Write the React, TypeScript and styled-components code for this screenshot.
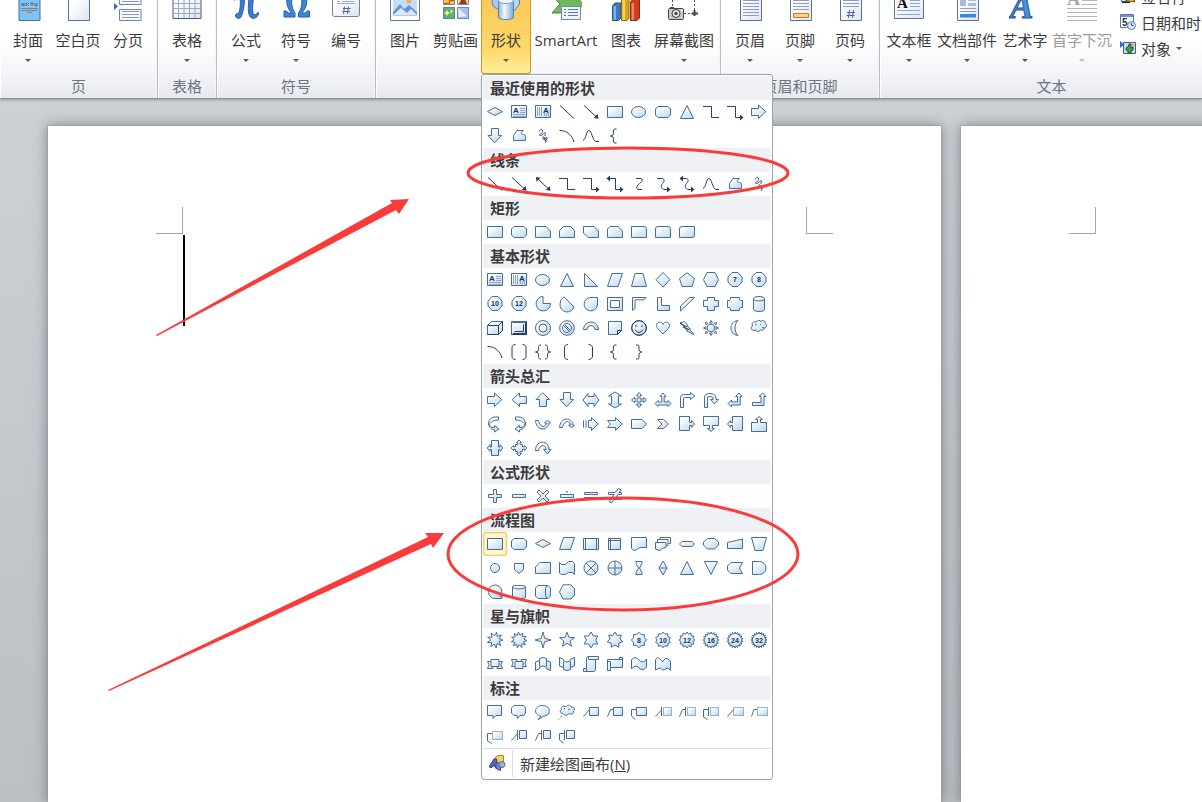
import React from 'react';
import styled, { createGlobalStyle, css } from 'styled-components';

const GlobalStyle = createGlobalStyle`
  *, *::before, *::after { box-sizing: border-box; }
  body {
    margin: 0;
    font-family: "Open Sans", "Noto Sans CJK SC", sans-serif;
    font-size: 15px;
    color: #3b3b3b;
    background: #bcbfc4;
  }
  button { font: inherit; color: inherit; }
`;

const Shell = styled.div`
  position: relative;
  display: flex;
  flex-direction: column;
  min-height: 100vh;
  overflow: hidden;
`;

/* ---------- ribbon ---------- */

const Ribbon = styled.header`
  position: relative;
  z-index: 2;
  display: flex;
  height: 99px;
  background: linear-gradient(#ffffff 0, #ffffff 40px, #f4f5f8 72px, #e6e9ee 98px);
  border-bottom: 1px solid #8b9097;
  box-shadow: 0 1px 3px rgba(80, 86, 94, 0.45);
`;

const Group = styled.section<{ $width: number; $grow?: boolean }>`
  flex: ${(p) => (p.$grow ? 1 : 0)} 0 ${(p) => p.$width}px;
  display: flex;
  flex-direction: column;
  justify-content: space-between;
  border-right: 1px solid #b9bcc2;
  box-shadow: inset -1px 0 #f4f5f8, inset 1px 0 #ffffff;
`;

const Tools = styled.div<{ $pad: number }>`
  display: flex;
  height: 74px;
  padding-left: ${(p) => p.$pad}px;
`;

const GroupTitle = styled.h2`
  margin: 0;
  height: 24px;
  line-height: 24px;
  font-size: 15px;
  font-weight: 400;
  text-align: center;
  color: #6b7480;
`;

const Slot = styled.div`
  position: relative;
  display: flex;
`;

const ToolButton = styled.button<{ $width: number; $active?: boolean }>`
  flex: none;
  width: ${(p) => p.$width}px;
  height: 74px;
  padding: 0;
  display: flex;
  flex-direction: column;
  align-items: center;
  border: 0;
  background: none;
  white-space: nowrap;
  &:disabled { color: #9b9b9b; }
  svg { display: block; flex: none; }
  ${(p) =>
    p.$active &&
    css`
      border: 1px solid #c29b29;
      border-top: 0;
      border-radius: 0 0 3px 3px;
      background: linear-gradient(#f9c95a 0, #ffd86b 50px, #fff09a 74px);
    `}
`;

const ToolLabel = styled.span`
  height: 20px;
  margin: 6px 0 9px;
  line-height: 20px;
`;

const Caret = styled.i<{ $faint?: boolean }>`
  width: 0;
  height: 0;
  border: 3px solid transparent;
  border-top-color: ${(p) => (p.$faint ? '#bdbdbd' : '#5c5c5c')};
  border-bottom: 0;
`;

const SmallTools = styled.div`
  display: flex;
  flex-direction: column;
  margin: -17px 0 0 6px;
`;

const SmallButton = styled.button`
  display: flex;
  align-items: center;
  gap: 5px;
  height: 26px;
  padding: 0;
  border: 0;
  background: none;
  white-space: nowrap;
  svg { flex: none; }
`;

/* ---------- shapes menu ---------- */

const Menu = styled.div`
  position: absolute;
  left: 0;
  top: 100%;
  z-index: 3;
  width: 292px;
  padding: 1px;
  border: 1px solid #9da1a8;
  border-radius: 3px;
  background: #fff;
`;

const MenuHeading = styled.h3`
  margin: 0;
  height: 24px;
  padding-left: 7px;
  line-height: 24px;
  font-size: 15px;
  font-weight: 700;
  background: #f0f1f5;
`;

const ShapeGrid = styled.div`
  display: grid;
  grid-template-columns: repeat(12, 24px);
  grid-auto-rows: 24px;
`;

const ShapeButton = styled.button<{ $selected?: boolean }>`
  display: grid;
  place-items: center;
  padding: 0;
  border: 0;
  border-radius: 3px;
  background: none;
  svg { display: block; }
  ${(p) =>
    p.$selected &&
    css`
      background: #fff5cf;
      box-shadow: inset 0 0 0 1px #f3d061, inset 0 0 0 2px #fbe9a6;
    `}
`;

const CanvasItem = styled.button`
  display: flex;
  width: 100%;
  height: 30px;
  padding: 0;
  border: 0;
  border-top: 1px solid #dcdee3;
  background: none;
  text-align: left;
`;

const ItemIcon = styled.span`
  width: 30px;
  margin: 1px 0;
  border-right: 1px solid #dcdee3;
  display: flex;
  align-items: center;
  padding-left: 6px;
`;

const ItemText = styled.span`
  padding-left: 7px;
  line-height: 30px;
`;

/* ---------- document ---------- */

const Workspace = styled.main`
  flex: 1;
  display: flex;
  gap: 20px;
  min-height: 703px;
  padding: 27px 0 0 48px;
  background: linear-gradient(#cdd1d6, #bcbfc4);
`;

const Page = styled.article`
  flex: 0 0 893px;
  padding-top: 81px;
  background: #fff;
  box-shadow: 0 0 0 1px rgba(150, 154, 160, 0.5), 0 0 12px 1px rgba(72, 78, 86, 0.55);
`;

const Marks = styled.div`
  display: flex;
  justify-content: space-between;
  padding: 0 108px;
`;

const Mark = styled.span<{ $side: 'left' | 'right' }>`
  width: 27px;
  height: 27px;
  border-bottom: 1px solid #a6a6a6;
  border-${(p) => (p.$side === 'left' ? 'right' : 'left')}: 1px solid #a6a6a6;
`;

const TextCursor = styled.div`
  width: 2px;
  height: 91px;
  margin: 1px 0 0 135px;
  background: #000;
`;

const Annotations = styled.svg`
  position: absolute;
  left: 0;
  top: 0;
  z-index: 4;
  pointer-events: none;
`;

/* ---------- shape glyphs, drawn on a 24 x 24 grid ---------- */

type Glyph = {
  f?: string; // outlined and filled
  h?: string; // thin blue outline over the fill
  l?: string; // dark line
  s?: string; // dark solid
  d?: string; // dotted box
  t?: string; // number or letter inside
  tx?: number;
};

const RECT = 'M4.5 6.5H19.5V17.5H4.5Z';
const OCTAGON = 'M9 4.5H15L19 9V14L15 18.5H9L5 14V9Z';
const circ = (x: number, y: number, r: number, ry = r) =>
  `M${x - r} ${y}A${r} ${ry} 0 1 1 ${x + r} ${y}A${r} ${ry} 0 1 1 ${x - r} ${y}Z`;

const star = (n: number, r1: number, r2: number, turn = 0) => {
  let d = '';
  for (let i = 0; i < n * 2; i++) {
    const r = i % 2 ? r2 : r1;
    const a = (Math.PI * i) / n - Math.PI / 2 + turn;
    d += `${i ? 'L' : 'M'}${(12 + r * Math.cos(a)).toFixed(1)} ${(12 + r * Math.sin(a)).toFixed(1)}`;
  }
  return d + 'Z';
};

const G: Record<string, Glyph> = {
  decision: { f: 'M4.5 11.5L12 7.5 19.5 11.5 12 15.5Z' },
  textBox: { f: 'M4.5 5.5H19.5V17.5H4.5Z', h: 'M13 8.5H18M13 10.5H18M13 12.5H18M6 14.5H18M6 16.5H18', t: 'A', tx: 9 },
  vTextBox: { f: 'M4.5 5.5H19.5V17.5H4.5Z', h: 'M6.5 7V16M8.5 7V16M10.5 7V16M13.5 13V16M15.5 13V16M17.5 13V16', t: 'A', tx: 15 },
  line: { l: 'M5 5.5L19 18.5' },
  lineArrow: { l: 'M5 5.5L17 16.5', s: 'M19.5 18.8L18.6 14 14.8 18Z' },
  lineDouble: { l: 'M7 7L17 16.5', s: 'M19.5 18.8L18.6 14 14.8 18ZM4.8 5L5.6 9.8 9.4 5.8Z' },
  elbow: { l: 'M4 6.5H12.5V17.5H20' },
  elbowArrow: { l: 'M4 6.5H12.5V17.5H18', s: 'M17 14.5L20.5 17.5 17 20.5Z' },
  elbowDouble: { l: 'M6 6.5H12.5V17.5H18', s: 'M17 14.5L20.5 17.5 17 20.5ZM7 3.5L3.5 6.5 7 9.5Z' },
  curveConn: { l: 'M9 6.5H13C17 6.5 15.5 9.5 12.5 11.5S8.5 17.5 12 17.5H15' },
  curveArrow: { l: 'M6 6.5H10C14.5 6.5 13.5 9.5 11.5 11.5S10 17.5 14 17.5H17', s: 'M16 14.5L19.5 17.5 16 20.5Z' },
  curveDouble: { l: 'M7 6.5H10C14.5 6.5 13.5 9.5 11.5 11.5S10 17.5 14 17.5H17', s: 'M16 14.5L19.5 17.5 16 20.5ZM8 3.5L4.5 6.5 8 9.5Z' },
  curve: { l: 'M4 16.5C7.5 15 7 6.5 10 6.5S13 16.5 17 17.5H20' },
  freeform: { f: 'M10 6.5H16.5C13.5 8 14 10.5 16.5 10.5 19 11 18.5 13.5 18.5 16.5H6.5V11.5Z' },
  scribble: { l: 'M8 7.5C9 7 10.5 3.5 11.5 6.5S7 10.5 9 11.5 14.5 6.5 14.5 9.5 10 13.5 12 14.5 17 11.5 16 14.5 13 17 13 14.5 17 17 14 19' },
  arrowRight: { f: 'M4.5 8.5H11.5V5L18.8 11.7 11.5 18.5V15.5H4.5Z' },
  arrowLeft: { f: 'M19.5 8.5H12.5V5L5.2 11.7 12.5 18.5V15.5H19.5Z' },
  arrowUp: { f: 'M8.5 18.5V11.5H5L11.7 4.8 18.5 11.5H15.5V18.5Z' },
  arrowDown: { f: 'M8.5 4.5V11.5H5L11.7 18.8 18.5 11.5H15.5V4.5Z' },
  arc: { l: 'M4.5 6.5C12 6.5 17 11 19 18' },
  lBrace: { l: 'M13.500 5H12C10.500 5 10.500 6 10.500 8.500S10 11.500 7.500 12C10 12.500 10.500 13 10.500 15.500S10.500 19 12 19H13.500' },
  rBrace: { l: 'M9 5H10.5C12 5 12 6 12 8.5S12.5 11.5 15 12C12.5 12.5 12 13 12 15.5S12 19 10.5 19H9' },
  lBracket: { l: 'M13 4.5C10.5 4.5 9.5 6 9.5 8V16C9.5 18 10.5 19.5 13 19.5' },
  rBracket: { l: 'M9.5 4.5C12 4.5 13.5 6 13.5 8V16C13.5 18 12 19.5 9.5 19.5' },
  brackets: { l: 'M8.5 4.5C6 4.5 5 6 5 8V16C5 18 6 19.5 8.5 19.5M15.5 4.5C18 4.5 19 6 19 8V16C19 18 18 19.5 15.5 19.5' },
  braces: { l: 'M10 5C7 5 7.5 7 7.5 9S7 11.5 4.5 12C7 12.5 7.5 13 7.5 15S7 19 10 19M14 5C17 5 16.5 7 16.5 9S17 11.5 19.5 12C17 12.5 16.5 13 16.5 15S17 19 14 19' },
  rect: { f: RECT },
  ellipse: { f: circ(11.5, 12, 7, 5.5) },
  round: { f: 'M7 6.5H17L19.5 9V15L17 17.5H7L4.5 15V9Z' },
  triangle: { f: 'M12 5.5L18.5 18.5H5.5Z' },
  snip1: { f: 'M4.5 6.5H15L19.5 11V17.5H4.5Z' },
  snip2: { f: 'M8.5 6.5H15.5L19.5 10.5V17.5H4.5V10.5Z' },
  snipDiag: { f: 'M4.5 6.5H15L19.5 11V17.5H9L4.5 13Z' },
  snipRound: { f: 'M7 6.5H15L19.5 11V17.5H4.5V9Z' },
  round1: { f: 'M4.5 6.5H17Q19.5 6.5 19.5 9V17.5H4.5Z' },
  round2: { f: 'M7 6.5H17Q19.5 6.5 19.5 9V17.5H4.5V9Q4.5 6.5 7 6.5Z' },
  roundDiag: { f: 'M7 6.5H19.5V15Q19.5 17.5 17 17.5H4.5V9Q4.5 6.5 7 6.5Z' },
  rTriangle: { f: 'M5.5 5.5V18.5H18.5Z' },
  parallelogram: { f: 'M9 5.5H19.5L15 18.5H4.5Z' },
  trapezoid: { f: 'M8 5.5H16L19.5 18.5H4.5Z' },
  diamond: { f: 'M12 4.5L19 11.7 12 19 5 11.7Z' },
  pentagon: { f: 'M12 4.8L19.5 10.5 17 18.5H7L4.5 10.5Z' },
  hexagon: { f: 'M8 4.5H16L19.5 11.7 16 18.5H8L4.5 11.7Z' },
  hept: { f: OCTAGON, t: '7' },
  oct: { f: OCTAGON, t: '8' },
  dec: { f: OCTAGON, t: '10' },
  dodec: { f: OCTAGON, t: '12' },
  pie: { f: 'M12 4.5V11.5H19.5A7.2 7.2 0 1 1 12 4.5Z' },
  chord: { f: 'M9 4.8L19 15A7.2 7.2 0 0 1 5 12Q5 7 9 4.8Z' },
  teardrop: { f: 'M18.5 5.5V12A6.7 6.7 0 1 1 12 5.5Z' },
  frame: { f: 'M4.5 5.5H19.5V18.5H4.5ZM7.5 8.5V15.5H16.5V8.5Z' },
  halfFrame: { f: 'M5.5 5.5H19L17 7.8H8V16.5L5.5 18.5Z' },
  lShape: { f: 'M6.5 5.5H10.5V13.5H18.5V18.5H6.5Z' },
  stripe: { f: 'M14.5 5.5H19.5L5.5 19V14Z' },
  cross: { f: 'M8.5 5.5H15.5V8.5H19.5V14.5H15.5V18.5H8.5V14.5H4.5V8.5H8.5Z' },
  plaque: { f: 'M7.500 5.500H16.500V7.500L17.500 8.500H19.500V15.500H17.500L16.500 16.500V18.500H7.500V16.500L6.500 15.500H4.500V8.500H6.500L7.500 7.500Z' },
  can: { f: 'M6.5 6.5Q6.5 4.5 12 4.5T17.5 6.5V17.5Q17.5 19.5 12 19.5T6.5 17.5Z', h: 'M6.5 7Q7 9 12 9T17.5 7' },
  cube: { f: 'M4.5 9.5L8.5 5.5H19.5V14.5L15.5 18.5H4.5Z', l: 'M4.5 9.5H15.5V18.5M15.5 9.5L19.5 5.5V14.5L15.5 18.5H4.5' },
  bevel: { f: 'M4.5 5.5H19.5V18.5H4.5Z', h: 'M5.500 6.500H18.500', l: 'M7.5 15.5H16.5V8.5M19.5 5.5V18.5H4.5M18.5 6.5V17.5H6' },
  donut: { f: circ(12, 12, 7.5) + circ(12, 12, 4) },
  noSymbol: { f: circ(12, 12, 7.3), h: circ(12, 12, 4.500) + 'M8.500 9.500L14.500 15.500M9.500 8.500L15.500 14.500' },
  blockArc: { f: 'M4.5 13.5A7.5 7.5 0 0 1 19.5 13.5H16A4 4 0 0 0 8 13.5Z' },
  folded: { f: 'M5.5 5.5H18.5V14.5L14.5 18.5H5.5Z', l: 'M14.5 18.5V14.5H18.5Z' },
  smiley: { f: circ(12, 12, 7.3), l: circ(12, 12, 7.3) + 'M9 9V11M15 9V11M8 13.5Q9.5 16.5 12 16.5T16 13.5' },
  heart: { f: 'M12 8.5C13 5 18.5 5.5 18.5 9.5 18.5 12.5 14.5 15 12 18 9.5 15 5.5 12.5 5.5 9.5 5.5 5.5 11 5 12 8.5Z' },
  bolt: { f: 'M5 7L9.5 5.5 13 9.5 12 10 15.5 13 14.5 13.5 19 18.5 11 14.5 12.5 14 8 11 9.5 10.5Z', l: 'M5 7L12 11M8.5 11L14 13.5' },
  sun: { f: circ(12, 12, 3.8), h: 'M12 4.5L13.5 7H10.5ZM12 19.5L13.5 17H10.5ZM4.5 12L7 10.5V13.5ZM19.5 12L17 10.5V13.5ZM6.5 6.5L9 7.3 7.3 9ZM17.5 6.5L15 7.3 16.7 9ZM6.5 17.5L9 16.7 7.3 15ZM17.5 17.5L15 16.7 16.7 15Z' },
  moon: { f: 'M15 4.5C10 5 8 8.5 8 12S10 19 15 19.5C11 16 11 8 15 4.5Z' },
  cloud: { f: 'M7 14.500C4 14.500 3.500 11 5.500 10 4 7 7 5 9 6.200 10.500 4 13 4 14 5.500 16 3.500 18.500 5 18 7 20.500 8 20 11.500 17.500 12 17 14.500 14.500 15 13.500 13.800 12 16.500 9 16 8.800 13.800Z', h: 'M8 9L10 8M13 8L14 9M15 11.500L17.500 12' },
  leftRight: { f: 'M4 12L9 5.5V8.5H15V5.5L20 12 15 18.5V15.5H9V18.5Z' },
  upDown: { f: 'M12 4L18.5 8H15.5V16H18.5L12 20 5.5 16H8.5V8H5.5Z' },
  quad: { f: 'M12 4.5L14.5 7.5H13V11H16.5V9.5L19.5 12 16.5 14.5V13H13V16.5H14.5L12 19.5 9.5 16.5H11V13H7.5V14.5L4.5 12 7.5 9.5V11H11V7.5H9.5Z' },
  triArrow: { f: 'M12 5L15 8.5H13.2V14H17V12.5L20 15.5 17 18.5V17H7V18.5L4 15.5 7 12.5V14H10.8V8.5H9Z' },
  bent: { f: 'M5.5 19.5V9.5Q5.5 6.5 8.5 6.5H15.5V4.5L19.8 8 15.5 11.5V9.5H9.5Q8.5 9.5 8.5 11V19.5Z' },
  uTurn: { f: 'M5.5 19.5V10Q5.5 5.5 11 5.5T17 10V11.5H19.5L15.5 16 11.5 11.5H14V10Q14 8.5 11 8.5T8.5 10V19.5Z' },
  leftUp: { f: 'M5 15.5L8.5 12V14H14.5V8.5H12.5L16 5 19 8.5H17.2V17H8.5V19Z' },
  bentUp: { f: 'M5.5 14.5H14V8.5H12L15.7 5 19 8.5H17V17.5H5.5Z' },
  curvedRight: { f: 'M15.500 5C7 4 4.500 9 6.500 13 8 15.500 9.500 15.500 11.500 15.500V13.500L16 17 11.500 20V18C8 17.500 5 14 5.500 10.500M7 11.500C9 8.500 12 8 15.500 8V5' },
  curvedLeft: { f: 'M8.500 5C17 4 19.500 9 17.500 13 16 15.500 14.500 15.500 12.500 15.500V13.500L8 17 12.500 20V18C16 17.500 19 14 18.500 10.500M17 11.500C15 8.500 12 8 8.500 8V5' },
  curvedUp: { f: 'M4.5 8.5H7.5C8 12 10 14 12.5 14.5 14.5 13.5 15.5 12.5 15.5 11H13.5L16.5 8 19.5 11H18C17.5 15 14.5 17 11.5 17 8 17 4.8 13.5 4.5 8.5Z' },
  curvedDown: { f: 'M4.5 15.5H7.5C8 12 10 10 12.5 9.5 14.5 10.5 15.5 11.5 15.5 13H13.5L16.5 16 19.5 13H18C17.5 9 14.5 7 11.5 7 8 7 4.8 10.5 4.5 15.5Z' },
  striped: { f: 'M9.5 8.5H12.5V5.5L19 12 12.5 18.5V15.5H9.5Z', h: 'M4.5 8.5V15.5M7 8.5V15.5' },
  notched: { f: 'M4.5 8.5H12.5V5.5L19 12 12.5 18.5V15.5H4.5L7.5 12Z' },
  pentArrow: { f: 'M4.5 7.5H15L19.5 12 15 16.5H4.5Z' },
  chevron: { f: 'M6.5 7.5H12.5L17.5 12 12.5 16.5H6.5L11 12Z' },
  calloutR: { f: 'M4.5 4.5H14.5V10.5H16.5V8.5L19.5 12 16.5 15.5V13.5H14.5V18.5H4.5Z' },
  calloutD: { f: 'M4.5 4.5H19.5V13.5H13.5V16.5H15.5L12 19.5 8.5 16.5H10.5V13.5H4.5Z' },
  calloutL: { f: 'M19.5 4.5H9.5V10.5H7.5V8.5L4.5 12 7.5 15.5V13.5H9.5V18.5H19.5Z' },
  calloutU: { f: 'M4.5 19.5H19.5V10.5H13.5V7.5H15.5L12 4.5 8.5 7.5H10.5V10.5H4.5Z' },
  calloutLR: { f: 'M8.5 4.5H15.5V11H17V8.5L19.8 12 17 15.5V13.5H15.5V19.5H8.5V13.5H7V15.5L4.2 12 7 8.5V11H8.5Z' },
  calloutQ: { f: 'M12 4L14.5 6.5H13.2V8.5H15.5V10.8H17.5V9.5L20 12 17.5 14.5V13.2H15.5V15.5H13.2V17.5H14.5L12 20 9.5 17.5H10.8V15.5H8.5V13.2H6.5V14.5L4 12 6.5 9.5V10.8H8.5V8.5H10.8V6.5H9.5Z' },
  circular: { f: 'M4.5 14.5C4.5 3.5 18 3.5 18 13.5H20L16.5 18 12.5 13.5H15C14.5 8 8.5 8.5 7.5 14.5Z' },
  plus: { f: 'M10.5 5.5H13.5V10.5H18.5V13.5H13.5V18.5H10.5V13.5H5.5V10.5H10.5Z' },
  minus: { f: 'M5.5 10.5H18.5V13.5H5.5Z' },
  times: { f: 'M8 6L12 10 16 6 18 8 14 12 18 16 16 18 12 14 8 18 6 16 10 12 6 8Z' },
  divide: { f: 'M5.5 10.5H18.5V13.5H5.5ZM11.5 7.5H12.5V8H11.5ZM11.5 16H12.5V17H11.5Z' },
  equal: { f: 'M5.5 8.5H18.5V10.5H5.5ZM5.5 13.5H18.5V15.5H5.5Z' },
  notEqual: { f: 'M5.5 8.5H12L15.5 4.5 18.5 6 16 8.5H18.5V10.5H15L13 13.5H18.5V15.5H11L8.5 19 6 17.5 8 15.5H5.5V13.5H9L11 10.5H5.5Z' },
  alt: { f: 'M7 6.5H17L19.5 9V15L17 17.5H7L4.5 15V9Z' },
  data: { f: 'M8.5 5.5H19.5L15.5 17.5H4.5Z' },
  predefined: { f: 'M4.5 6.5H19.5V17.5H4.5Z', h: 'M6.500 6.500V17.500M17.500 6.500V17.500' },
  internal: { f: 'M5.5 6.5H17.5V17.5H5.5Z', h: 'M7.500 6.500V17.500M5.500 8.500H17.500' },
  doc: { f: 'M4.5 5.5H19.5V15.5H14C11 15.5 10 18.5 7 18.5L4.5 16.5Z' },
  docs: { f: 'M4.5 10.5H15V15.5C11 15.5 10 18.5 8 18.5L4.5 17Z', h: 'M6.5 10V7.5H17V13.5H15.5M9 7V5.5H19.5V11.5H17.5' },
  terminator: { f: 'M7 9.5H17L19.5 12 17 14.5H7L4.5 12Z' },
  prep: { f: 'M8.500 6.500H15.500L19.500 10V13L15.500 17H8.500L4.500 13V10Z' },
  manualInput: { f: 'M4.5 10.5L19.5 7V16.5H4.5Z' },
  manualOp: { f: 'M4.5 5.5H19.5L16 18.5H8Z' },
  connector: { f: circ(12, 12, 4.5) },
  offpage: { f: 'M7.5 7.5H16.5V13.5L12 17.5 7.5 13.5Z' },
  card: { f: 'M9 6.5H19.5V17.5H4.5V11Z' },
  tape: { f: 'M4.500 6.500L6.500 8.500H10.500L13.500 5.500H17.500L19.500 7.500V18.500L17.500 16.500H13.500L10.500 18.500H6.500L4.500 17Z' },
  summing: { f: circ(12, 12, 7), h: 'M7 7L17 17M17 7L7 17' },
  or: { f: circ(12, 12, 7), h: 'M12 5V19M5 12H19' },
  collate: { f: 'M9 5.5H15V7.5L12.5 12 15 16.5V18.5H9V16.5L11.5 12 9 7.5Z' },
  sort: { f: 'M12 5L16 12 12 19 8 12Z', h: 'M8 12H16' },
  extract: { f: 'M12 5.5L18.5 18.5H5.5Z' },
  merge: { f: 'M12 18.5L18.5 5.5H5.5Z' },
  stored: { f: 'M8 6.5H19.5L16.5 12 19.5 17.5H8L4.5 14V10Z' },
  delay: { f: 'M5.5 5.5H12.5A6.5 6.5 0 0 1 12.5 18.5H5.5Z' },
  sequential: { f: 'M17 16.5H19V18.5H11A6.8 6.8 0 1 1 17 16.5Z' },
  disk: { f: 'M5.5 6.5Q5.5 5.5 12 5.5T18.5 6.5V17.5Q18.5 18.5 12 18.5T5.5 17.5Z', h: 'M5.5 7Q6 9 12 9T18.5 7' },
  direct: { f: 'M7 5.5H17L19.5 8V16L17 18.5H7L4.5 16V8Z', h: 'M16 5.5L14.5 8.5V15.5L16 18.5' },
  display: { f: 'M8 4.8H16L19.5 9V15L16 19H8L4.5 12Z' },
  burst1: { f: star(9, 8, 4.2, 0.2) },
  burst2: { f: star(11, 8, 4.8, 0.5) },
  star4: { f: star(4, 8, 2.4) },
  star5: { f: star(5, 7.8, 3.3) },
  star6: { f: star(6, 8, 4.6) },
  star7: { f: star(7, 8, 5) },
  star8: { f: star(8, 7.6, 6), t: '8' },
  star10: { f: star(10, 7.8, 6), t: '10' },
  star12: { f: star(12, 8, 6), t: '12' },
  star16: { f: star(16, 8, 6), t: '16' },
  star24: { f: star(18, 8, 6), t: '24' },
  star32: { f: star(20, 8, 6), t: '32' },
  ribbonUp: { f: 'M4.5 9.5H8V7.5H16V9.5H19.5L18 12.5 19.5 16.5H14V14.5H10V16.5H4.5L6 12.5Z', h: 'M8 9.5V14.5H10M16 9.5V14.5H14' },
  ribbonDown: { f: 'M4.5 7.5H10V9.5H14V7.5H19.5L18 11 19.5 14.5H16V16.5H8V14.5H4.5L6 11Z', h: 'M8 14.5V9.5M16 14.5V9.5M10 9.5H8M14 9.5H16' },
  curvedRibbonUp: { f: 'M8.5 6.5Q12 4.5 15.5 6.5V8.5L19.5 10V18.5L16 17 14.5 14.5Q12 13.5 9.5 14.5L8 17 4.5 18.5V10L8.5 8.5Z', h: 'M8.5 8.5V14.5M15.5 8.5V14.5' },
  curvedRibbonDown: { f: 'M8.5 17.5Q12 19.5 15.5 17.5V15.5L19.5 14V5.5L16 7 14.5 9.5Q12 10.5 9.5 9.5L8 7 4.5 5.5V14L8.5 15.5Z', h: 'M8.5 15.5V9.5M15.5 15.5V9.5' },
  vScroll: { f: 'M7.5 16.5V6.5Q7.5 4.5 9.5 4.5H19.5V7.5H16.5V17.5Q16.5 19.5 14.5 19.5H4.5V16.5Z', h: 'M9.5 4.5V7.5H16.5M7.5 16.5V19' },
  hScroll: { f: 'M4.5 7.5H16.5V5.5H19.5V15.5H7.5V18.5H4.5Z', h: 'M7.5 15.5V9.5H4.5M16.5 7.5H19.5' },
  wave: { f: 'M4.500 7.500Q8 3.500 12 8T19.500 7V15Q16 20 12 16T4.500 17Z' },
  doubleWave: { f: 'M4.500 7.500Q6.500 4 8.500 6.500T12 9.500Q14 5 16 6.500T19.500 9V18.500Q17 14.500 15 16.500T11.500 18Q9 14.500 7.500 16.500L4.500 18Z' },
  cRect: { f: 'M4.5 5.5H18.5V15.5H13L10 18.5V15.5H4.5Z' },
  cRound: { f: 'M7 5.5H16.5L18.5 8V13L16.5 15.5H13L10.5 18.5 10 15.5H7L4.5 13V8Z' },
  cOval: { f: 'M10 16.2C2 15 3 5.5 11.5 5.5S21 15.5 12.5 16.2L7 19.5Z' },
  cCloud: { f: 'M8 13.5C4 13 5 10 6.5 9.5 5.5 6.5 9 5 11 6.8 12.5 4.5 15.5 5 16 7 19.5 6 20.5 10 18.5 11 19.5 14 16 15 14 13.5 12.5 16 9 15.5 8 13.5Z', h: 'M8.500 9L10 8.500M13 9.500L15 9M7 16L5.500 17M5 18.500L4 19.500' },
  c1: { f: 'M10.5 7.5H19.5V15.5H10.5Z', h: 'M10.5 9.5L4.5 16.5' },
  c2: { f: 'M10.5 7.5H19.5V15.5H10.5Z', h: 'M10.5 9.5H7.5L4.5 16.5' },
  c3: { f: 'M9.5 7.5H19.5V15.5H9.5Z', h: 'M9.5 9.5H4.5V16L8.5 19.5' },
  a1: { d: 'M12.5 7.5H20.5V15.5H12.5Z', h: 'M10.5 7V16M10.5 10L4.5 16.5' },
  a2: { d: 'M12.5 7.5H20.5V15.5H12.5Z', h: 'M10.5 7V16M10.5 9.5H7.5L4.5 16.5' },
  a3: { d: 'M11.5 7.5H19.5V15.5H11.5Z', h: 'M9.5 7V16M9.5 9.5H4.5V17L8.5 19.5' },
  n1: { d: 'M10.5 7.5H20.5V15.5H10.5Z', h: 'M10.5 9.5L4.5 16.5' },
  n2: { d: 'M10.5 7.5H20.5V15.5H10.5Z', h: 'M10 9.5H7L4.5 16.5' },
  n3: { d: 'M9.5 7.5H19.5V15.5H9.5Z', h: 'M9 9.5H4.5V17L8.5 19.5' },
  b1: { f: 'M12.5 6.5H19.5V14.5H12.5Z', h: 'M10.5 6V16M10.5 9.5L4.5 16.5' },
  b2: { f: 'M12.5 6.5H19.5V14.5H12.5Z', h: 'M10.5 6V16M10.5 9.5H7.5L4.5 16.5' },
  b3: { f: 'M11.5 6.5H19.5V14.5H11.5Z', h: 'M9.5 6V16M9.5 9.5H4.5V16L8.5 19.5' },
};

const SECTIONS: { title: string; shapes: string; selected?: number }[] = [
  { title: '最近使用的形状', shapes: 'decision textBox vTextBox line lineArrow rect ellipse round triangle elbow elbowArrow arrowRight arrowDown freeform scribble arc curve lBrace' },
  { title: '线条', shapes: 'line lineArrow lineDouble elbow elbowArrow elbowDouble curveConn curveArrow curveDouble curve freeform scribble' },
  { title: '矩形', shapes: 'rect round snip1 snip2 snipDiag snipRound round1 round2 roundDiag' },
  { title: '基本形状', shapes: 'textBox vTextBox ellipse triangle rTriangle parallelogram trapezoid diamond pentagon hexagon hept oct dec dodec pie chord teardrop frame halfFrame lShape stripe cross plaque can cube bevel donut noSymbol blockArc folded smiley heart bolt sun moon cloud arc brackets braces lBracket rBracket lBrace rBrace' },
  { title: '箭头总汇', shapes: 'arrowRight arrowLeft arrowUp arrowDown leftRight upDown quad triArrow bent uTurn leftUp bentUp curvedRight curvedLeft curvedUp curvedDown striped notched pentArrow chevron calloutR calloutD calloutL calloutU calloutLR calloutQ circular' },
  { title: '公式形状', shapes: 'plus minus times divide equal notEqual' },
  { title: '流程图', selected: 0, shapes: 'rect alt decision data predefined internal doc docs terminator prep manualInput manualOp connector offpage card tape summing or collate sort extract merge stored delay sequential disk direct display' },
  { title: '星与旗帜', shapes: 'burst1 burst2 star4 star5 star6 star7 star8 star10 star12 star16 star24 star32 ribbonUp ribbonDown curvedRibbonUp curvedRibbonDown vScroll hScroll wave doubleWave' },
  { title: '标注', shapes: 'cRect cRound cOval cCloud c1 c2 c3 a1 a2 a3 n1 n2 n3 b1 b2 b3' },
];

function ShapeGlyph({ name }: { name: string }) {
  const g = G[name];
  return (
    <svg width="24" height="24" fill="none" aria-hidden="true">
      {g.d && <path d={g.d} stroke="#4a6b92" strokeDasharray="1 1" fill="url(#shapeFill)" />}
      {g.f && <path d={g.f} stroke="#4a6b92" fill="url(#shapeFill)" fillRule="evenodd" />}
      {g.h && <path d={g.h} stroke={g.t ? '#8fa6cc' : '#4a6b92'} />}
      {g.l && <path d={g.l} stroke="#263c66" />}
      {g.s && <path d={g.s} fill="#263c66" />}
      {g.t && (
        <text
          x={g.tx ?? 12}
          y={g.tx ? 13 : name.startsWith('star') ? 15 : 14}
          textAnchor="middle"
          fontFamily="Liberation Sans, sans-serif"
          fontSize={g.tx ? 8 : 7}
          fontWeight="700"
          fill="#12345e"
        >
          {g.t}
        </text>
      )}
    </svg>
  );
}

/* ---------- ribbon icons: lower part of each 32px icon ---------- */

const sheet = (
  <path d="M6.5-8H27.5V20.5H6.5Z" fill="url(#sheetFill)" stroke="#5a7391" />
);

const ICONS: Record<string, React.ReactNode> = {
  cover: (
    <>
      <path d="M7-8H28V20.5H7Z" fill="#7cc4f5" stroke="#4b6f94" />
      <path d="M9 3.5H26V6.5H9Z" fill="#a9d8f8" />
      <path d="M10 6V3L12 6V3M14 6V3L17 6M17 3L14 6M19 6V3H21V6M23 3V6H25V3" stroke="#35648f" />
      <path d="M9 8.5H26M10 10.5H25M15 12.5H20" stroke="#8f7d70" />
    </>
  ),
  blank: sheet,
  pageBreak: (
    <>
      <path d="M7.5-8H29V4.5H7.5ZM7.5 9.5H29V20.5H7.5Z" fill="#f8faff" stroke="#6d83a5" />
      <path d="M10 1.5H27M10 11.5H27M10 14.5H27M10 17.5H27" stroke="#8798c6" />
      <path d="M2 3L6 6.5 2 10Z" fill="#2f63c8" />
    </>
  ),
  table: (
    <>
      <path d="M2-8H30V18.5H2Z" fill="url(#sheetFill)" stroke="#45597c" />
      <path d="M2 3.5H30M2 8.5H30M2 13.5H30M7.5-8V18M13-8V18M18.5-8V18M24-8V18" stroke="#9aa7bd" />
    </>
  ),
  pi: (
    <>
      <path d="M4 1L6-3H12V0H6Z" fill="#4a86dc" />
      <path d="M10-2H14.500C14.500 5 13 13 11 17 9.500 19.500 5 18.500 5.500 15 6 13 8.500 14.500 9.500 11 10.500 7 10.500 2 10-2Z" fill="#3d7ad3" stroke="#2a5bab" />
      <path d="M19-2H23.500C22.500 6 22 13 24 14.500 26 15.500 26.500 13 28.500 12.500 28.500 17 25 19 22 18 17.500 16.500 18 8 19-2Z" fill="#3d7ad3" stroke="#2a5bab" />
    </>
  ),
  omega: (
    <path d="M4 11H6.500L8 13H11.500C8 9 6 4 7-2H12C11 3 12 9 15 13V17H4ZM29.500 11H27L25.500 13H22C25.500 9 27.500 4 26.500-2H21.500C22.500 3 21.500 9 18.500 13V17H29.500Z" fill="#3d84da" stroke="#2a5bab" />
  ),
  number: (
    <>
      <rect x="2.500" y="-10" width="27" height="26.500" rx="2" fill="url(#sheetFill)" stroke="#6d83a5" />
      <path d="M7 1.500H10M12 1.500H24M7 3.500H25" stroke="#a3acbc" />
      <path d="M14.500 6.500L13.500 14M18.500 6.500L17.500 14M13 8.500H20.500M12.500 11.500H20" stroke="#4763a8" />
    </>
  ),
  picture: (
    <>
      <path d="M1.500-8H30.500V20.500H1.500Z" fill="#fff" stroke="#5a7ba0" />
      <path d="M4-8H28V15H4Z" fill="#bfe0fa" />
      <path d="M4 12L11 4 15 9 20 5 28 12V15.500H4Z" fill="#6d92d8" />
      <path d="M4 15L12 8 18 13 22 9 28 15Z" fill="#dce9fb" />
      <circle cx="20" cy="1" r="2.500" fill="#f0a765" />
    </>
  ),
  clipArt: (
    <>
      <path d="M3.500-7H14.500V4.500H3.500Z" fill="#d8412a" stroke="#7d8aa5" />
      <path d="M4-2H9V3H4ZM10 1H14V4H10Z" fill="#f7c33c" />
      <path d="M17.500-7H28.500V4.500H17.500Z" fill="#f3d7b2" stroke="#7d8aa5" />
      <path d="M19 4L21 0 25-1 27 4Z" fill="#9a3d16" />
      <path d="M3.500 7.500H14.500V18.500H3.500Z" fill="#5cb270" stroke="#5d8a7a" />
      <path d="M7 10L8 12 10 13 8 14 7 16 6 14 4 13 6 12ZM11 9L12 10.500 13.500 11.500 12 12 11 14 10.500 12Z" fill="#f5f7a5" />
      <path d="M17.500 7.500H28.500V18.500H17.500Z" fill="#a9c0ee" stroke="#6b86c2" />
      <path d="M18 8L27 16 19 17Z" fill="#e5ecfb" />
    </>
  ),
  shapes: (
    <>
      <circle cx="9" cy="2" r="7" fill="#a8c8ec" stroke="#5580b4" />
      <path d="M14-8H29.500V4L25 10H14Z" fill="#bdd5f1" stroke="#5580b4" />
      <path d="M8.500 1V17Q8.500 19.500 16 19.500T23.500 17V1Z" fill="url(#tube)" stroke="#5580b4" />
      <ellipse cx="16" cy="1" rx="7.500" ry="2.500" fill="#f0f6fd" stroke="#7fa2cb" />
    </>
  ),
  smartArt: (
    <>
      <path d="M3-4H26L33 4 27 13H2L10 4Z" fill="#6fb95c" stroke="#3c8a35" />
      <path d="M11.500 6.500H30.500V19.500H11.500Z" fill="#eef4fb" stroke="#6f8aab" />
      <path d="M14 9.500H16M18 9.500H28M14 12.500H16M18 12.500H28M14 15.500H16M18 15.500H28" stroke="#5c78a6" />
    </>
  ),
  chart: (
    <>
      <path d="M2.500 6L5 3H11V18L8.500 20.500H2.500Z" fill="#3e78bd" stroke="#234f86" />
      <path d="M3.500 6H6V20H3.500Z" fill="#7fb0e4" />
      <path d="M11.500-1L14-4H19V18L17 20.500H11.500Z" fill="#d9a514" stroke="#94700c" />
      <path d="M12.500 0H15V20H12.500Z" fill="#f5d35d" />
      <path d="M20.500 2L23-1H29.500V18L27 20.500H20.500Z" fill="#d23d1c" stroke="#8f2410" />
      <path d="M21.500 3H24V20H21.500Z" fill="#f2835f" />
    </>
  ),
  screenshot: (
    <>
      <path d="M4.500 0V8M26.500 0V10M16 13.500H26" stroke="#555" strokeDasharray="2 2" />
      <path d="M26.500 10V16M23.500 13.500H30" stroke="#34465c" strokeWidth="2" />
      <rect x="0.500" y="8.500" width="15" height="11" rx="1" fill="#c7c9cc" stroke="#44484e" />
      <path d="M2 7.500H6" stroke="#44484e" />
      <circle cx="8" cy="13.500" r="4" fill="#eceef0" stroke="#33373d" />
      <circle cx="8" cy="13.500" r="1.800" fill="#445064" />
      <path d="M13 10.500H15" stroke="#fff" />
    </>
  ),
  header: (
    <>
      {sheet}
      <path d="M9 .5H25M9 3.500H25M9 6.500H25M9 9.500H25M9 12.500H25M9 15.500H25" stroke="#8c9cc8" />
    </>
  ),
  footer: (
    <>
      {sheet}
      <path d="M9 .5H25M9 3.500H25M9 6.500H25M9 9.500H25" stroke="#8c9cc8" />
      <path d="M9.500 13.500H24.500V17.500H9.500Z" fill="#fbd08a" stroke="#d07a14" />
    </>
  ),
  pageNumber: (
    <>
      {sheet}
      <path d="M9 .5H25M9 3.500H25M9 6.500H25" stroke="#8c9cc8" />
      <path d="M15.500 10L14.500 18M19.500 10L18.500 18M13 12.500H21M12.500 15.500H20.500" stroke="#4763a8" />
    </>
  ),
  textFrame: (
    <>
      <path d="M1.500-8H30.500V18.500H1.500Z" fill="url(#sheetFill)" stroke="#5a7391" />
      <path d="M17 .5H27M17 3.500H27M17 6.500H27M4 10.500H27M4 14.500H27" stroke="#8fa8cf" />
      <text x="4" y="8" fontFamily="Liberation Serif, serif" fontSize="15" fontWeight="700" fill="#111">A</text>
    </>
  ),
  parts: (
    <>
      {sheet}
      <path d="M9-3H15V6H9ZM17-3H25V1H17ZM17 3H25V6H17Z" fill="#a9bbdf" />
      <path d="M9 8.500H25M9 11.500H25" stroke="#8c9cc8" />
      <path d="M9 14H25V17.500H9Z" fill="#3a86e8" />
    </>
  ),
  wordArt: (
    <text x="1" y="18" fontFamily="Liberation Serif, serif" fontSize="35" fontWeight="700" fontStyle="italic" fill="#4a8fe6" stroke="#2a5596">A</text>
  ),
  dropCap: (
    <>
      <text x="1" y="5" fontFamily="Liberation Serif, serif" fontSize="18" fontWeight="700" fill="#a5a5a5">A</text>
      <path d="M16 .5H31M16 4.500H31M1 8.500H31M1 12.500H31M1 16.500H31M1 20.500H31" stroke="#b5b5b5" />
    </>
  ),
};

type Tool = { label: string; icon: string; width?: number; caret?: boolean; active?: boolean; disabled?: boolean };

function RibbonTool({ label, icon, width = 50, caret, active, disabled }: Tool) {
  return (
    <ToolButton type="button" $width={width} $active={active} disabled={disabled} aria-expanded={active}>
      <svg width="32" height="24" fill="none" aria-hidden="true">{ICONS[icon]}</svg>
      <ToolLabel>{label}</ToolLabel>
      {caret && <Caret $faint={disabled} />}
    </ToolButton>
  );
}

const SignatureIcon = (
  <svg width="16" height="16" fill="none" aria-hidden="true">
    <path d="M1.500 2H14.500V13.500H1.500Z" fill="#dfe9f7" stroke="#38588c" />
    <path d="M3 11L8 4 12 9 15 14 8 13Z" fill="#e9c22e" stroke="#7c6314" />
    <path d="M2 14.500H10" stroke="#222" />
  </svg>
);
const DateIcon = (
  <svg width="16" height="16" fill="none" aria-hidden="true">
    <path d="M.5 .5H13.500V13.500H.5Z" fill="#fff" stroke="#5878ad" />
    <path d="M1 1H13V3H1Z" fill="#6a92d6" />
    <text x="2" y="12" fontFamily="Liberation Sans, sans-serif" fontSize="10" fontWeight="700" fill="#1c2c4e">5</text>
    <circle cx="11.500" cy="11.500" r="4" fill="#dbe8fa" stroke="#5a7fc0" />
    <path d="M11.500 9V11.500H13.500" stroke="#2c4a85" />
  </svg>
);
const ObjectIcon = (
  <svg width="16" height="16" fill="none" aria-hidden="true">
    <path d="M3.500 2.500H15.500V13.500H3.500Z" fill="#c7ddf4" stroke="#3d5f96" />
    <path d="M6 8L8 7 9 4 11 4 11 8 13 7 13 10 11 11V13H8V11L6 10Z" fill="#3ba348" stroke="#1c5b26" />
    <circle cx="13" cy="5" r="1.500" fill="#f2a531" />
    <path d="M0 1L4.500 4.500 0 8Z" fill="#3568d0" />
  </svg>
);

function ShapesMenu() {
  return (
    <Menu role="menu">
      {SECTIONS.map((section) => (
        <React.Fragment key={section.title}>
          <MenuHeading>{section.title}</MenuHeading>
          <ShapeGrid>
            {section.shapes.split(' ').map((name, i) => (
              <ShapeButton key={name} type="button" aria-label={name} $selected={section.selected === i}>
                <ShapeGlyph name={name} />
              </ShapeButton>
            ))}
          </ShapeGrid>
        </React.Fragment>
      ))}
      <CanvasItem type="button">
        <ItemIcon>
          <svg width="17" height="17" fill="none" aria-hidden="true">
            <path d="M6 2.500L9 .5H14.500V7L12 9H6Z" fill="#f2d35b" stroke="#a98a28" />
            <path d="M0 12L5 4H7.500L9 13H6.500L6 11H4L3 12.500Z" fill="#5a5fc4" stroke="#333a8a" />
            <path d="M7 8H11.500V15.500L7 13.500Z" fill="#6a86cf" stroke="#34498c" />
            <circle cx="13" cy="9.500" r="3" fill="#9fb0c8" stroke="#5c6c88" />
          </svg>
        </ItemIcon>
        <ItemText>新建绘图画布(<u>N</u>)</ItemText>
      </CanvasItem>
    </Menu>
  );
}

export default function App() {
  return (
    <Shell>
      <GlobalStyle />
      <Ribbon>
        <Group $width={158}>
          <Tools $pad={3}>
            <RibbonTool label="封面" icon="cover" caret />
            <RibbonTool label="空白页" icon="blank" />
            <RibbonTool label="分页" icon="pageBreak" />
          </Tools>
          <GroupTitle>页</GroupTitle>
        </Group>
        <Group $width={59}>
          <Tools $pad={4}>
            <RibbonTool label="表格" icon="table" caret />
          </Tools>
          <GroupTitle>表格</GroupTitle>
        </Group>
        <Group $width={159}>
          <Tools $pad={4}>
            <RibbonTool label="公式" icon="pi" caret />
            <RibbonTool label="符号" icon="omega" caret />
            <RibbonTool label="编号" icon="number" />
          </Tools>
          <GroupTitle>符号</GroupTitle>
        </Group>
        <Group $width={345} aria-label="插图">
          <Tools $pad={4}>
            <RibbonTool label="图片" icon="picture" />
            <RibbonTool label="剪贴画" icon="clipArt" width={51} />
            <Slot>
              <RibbonTool label="形状" icon="shapes" caret active />
              <ShapesMenu />
            </Slot>
            <RibbonTool label="SmartArt" icon="smartArt" width={70} />
            <RibbonTool label="图表" icon="chart" />
            <RibbonTool label="屏幕截图" icon="screenshot" width={66} caret />
          </Tools>
        </Group>
        <Group $width={159}>
          <Tools $pad={4}>
            <RibbonTool label="页眉" icon="header" caret />
            <RibbonTool label="页脚" icon="footer" caret />
            <RibbonTool label="页码" icon="pageNumber" caret />
          </Tools>
          <GroupTitle>页眉和页脚</GroupTitle>
        </Group>
        <Group $width={344} $grow>
          <Tools $pad={4}>
            <RibbonTool label="文本框" icon="textFrame" caret />
            <RibbonTool label="文档部件" icon="parts" width={66} caret />
            <RibbonTool label="艺术字" icon="wordArt" caret />
            <RibbonTool label="首字下沉" icon="dropCap" width={64} caret disabled />
            <SmallTools>
              <SmallButton type="button">{SignatureIcon}签名行<Caret /></SmallButton>
              <SmallButton type="button">{DateIcon}日期和时间</SmallButton>
              <SmallButton type="button">{ObjectIcon}对象<Caret /></SmallButton>
            </SmallTools>
          </Tools>
          <GroupTitle>文本</GroupTitle>
        </Group>
      </Ribbon>

      <Workspace>
        <Page>
          <Marks>
            <Mark $side="left" />
            <Mark $side="right" />
          </Marks>
          <TextCursor />
        </Page>
        <Page>
          <Marks>
            <Mark $side="left" />
            <Mark $side="right" />
          </Marks>
        </Page>
      </Workspace>

      <Annotations width="1202" height="802" fill="none" aria-hidden="true">
        <defs>
          <linearGradient id="shapeFill" x1="0" y1="0" x2="0.8" y2="1">
            <stop offset="0.15" stopColor="#ffffff" />
            <stop offset="1" stopColor="#bfdcf0" />
          </linearGradient>
          <linearGradient id="sheetFill" x1="0" y1="0" x2="1" y2="1">
            <stop offset="0.3" stopColor="#ffffff" />
            <stop offset="1" stopColor="#dde4f3" />
          </linearGradient>
          <linearGradient id="tube">
            <stop offset="0" stopColor="#8fb4e0" />
            <stop offset="0.4" stopColor="#f4f9ff" />
            <stop offset="1" stopColor="#7ba5d8" />
          </linearGradient>
        </defs>
        <ellipse cx="628" cy="173" rx="160" ry="25" stroke="#fb3a3a" strokeWidth="3" />
        <ellipse cx="623" cy="554" rx="175" ry="56" stroke="#fb3a3a" strokeWidth="3" />
        <path d="M156 335L392 203 390 200 409 199 399 214 396 210 157 336Z" fill="#fb3a3a" />
        <path d="M108 690L428 537 425 533 444 533 433 548 431 544 109 691Z" fill="#fb3a3a" />
      </Annotations>
    </Shell>
  );
}
